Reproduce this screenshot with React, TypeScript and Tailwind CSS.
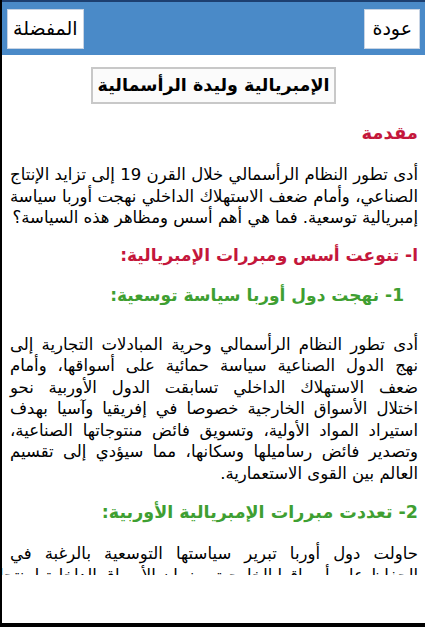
import React from "react";

const ar = { fontFamily: '"DejaVu Sans", sans-serif' };

function Line({ children, last = false }: { children: React.ReactNode; last?: boolean }) {
  return (
    <div
      className={
        last
          ? "whitespace-nowrap text-right"
          : "whitespace-nowrap text-justify [text-align-last:justify]"
      }
    >
      {children}
    </div>
  );
}

export default function App() {
  return (
    <div dir="rtl" className="w-[425px] h-[627px] bg-white border-l-[2px] border-b-[4px] border-black flex flex-col overflow-hidden" style={ar}>
      <div className="h-[55px] bg-[#4a8ac8] border-t-[2px] border-[#1d3f70] flex items-center justify-between px-[5px] shrink-0">
        <div className="h-[40px] px-[7px] bg-white border border-[#c8d4e4] flex items-center text-[19px] text-black">عودة</div>
        <div className="h-[40px] px-[5px] bg-white border border-[#c8d4e4] flex items-center text-[19px] text-black">المفضلة</div>
      </div>
      <div className="flex justify-center pt-[12px] shrink-0">
        <div className="h-[37px] px-[5px] border-[2px] border-[#c8c8c8] bg-[#fbfbfb] flex items-center text-[17.5px] font-bold text-black">
          الإمبريالية وليدة الرأسمالية
        </div>
      </div>
      <div className="h-[471px] overflow-hidden pr-[7px] pl-[8px] shrink-0">
        <div className="text-[#c4173b] text-[18px] font-bold leading-[26px] mt-[16px]">مقدمة</div>
        <div className="text-[16.5px] leading-[21.5px] text-black mt-[18px]">
          <Line>أدى تطور النظام الرأسمالي خلال القرن 19 إلى تزايد الإنتاج</Line>
          <Line>الصناعي، وأمام ضعف الاستهلاك الداخلي نهجت أوربا سياسة</Line>
          <Line last>إمبريالية توسعية. فما هي أهم أسس ومظاهر هذه السياسة؟</Line>
        </div>
        <div className="text-[#c4173b] text-[17px] font-bold leading-[28px] mt-[12px]">ا- تنوعت أسس ومبررات الإمبريالية:</div>
        <div className="text-[#3f9f32] text-[17px] font-bold leading-[28px] mt-[12px] pr-[14px]">1- نهجت دول أوربا سياسة توسعية:</div>
        <div className="text-[16.5px] leading-[21.5px] text-black mt-[25px]">
          <Line>أدى تطور النظام الرأسمالي وحرية المبادلات التجارية إلى</Line>
          <Line>نهج الدول الصناعية سياسة حمائية على أسواقها، وأمام</Line>
          <Line>ضعف الاستهلاك الداخلي تسابقت الدول الأوربية نحو</Line>
          <Line>اختلال الأسواق الخارجية خصوصا في إفريقيا وآسيا بهدف</Line>
          <Line>استيراد المواد الأولية، وتسويق فائض منتوجاتها الصناعية،</Line>
          <Line>وتصدير فائض رساميلها وسكانها، مما سيؤدي إلى تقسيم</Line>
          <Line last>العالم بين القوى الاستعمارية.</Line>
        </div>
        <div className="text-[#3f9f32] text-[17.5px] font-bold leading-[28px] mt-[14px]">2- تعددت مبررات الإمبريالية الأوربية:</div>
        <div className="text-[16.5px] leading-[21.5px] text-black mt-[17px]">
          <Line>حاولت دول أوربا تبرير سياستها التوسعية بالرغبة في</Line>
          <Line>الحفاظ على أسواقها الخارجية وضمان الأسواق الداخلية لمنتجاتها</Line>
        </div>
      </div>
    </div>
  );
}
